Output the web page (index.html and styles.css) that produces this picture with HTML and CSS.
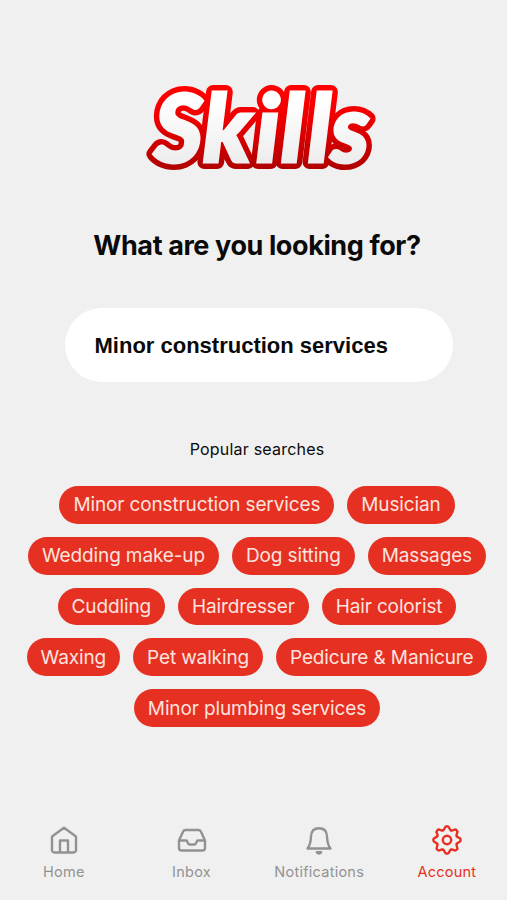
FILE: index.html
```html
<!DOCTYPE html>
<html lang="en">
<head>
    <meta charset="UTF-8">
    <meta name="viewport" content="width=device-width, initial-scale=1.0">
    <title>Skills</title>
    <link rel="stylesheet" href="styles.css">
</head>
<body>

<main class="container">
    <svg class="logo" viewBox="0 -30 250 155" role="img" aria-label="Skills">
        <defs>
            <linearGradient id="logoStroke" gradientUnits="userSpaceOnUse" x1="0" y1="10" x2="0" y2="94">
                <stop offset="0.1" stop-color="#ff0000"/>
                <stop offset="0.4" stop-color="#ee0000"/>
                <stop offset="1" stop-color="#b00000"/>
            </linearGradient>
            <linearGradient id="logoFill" gradientUnits="userSpaceOnUse" x1="0" y1="10" x2="0" y2="94">
                <stop offset="0.2" stop-color="#ffffff"/>
                <stop offset="1" stop-color="#ebebeb"/>
            </linearGradient>
        </defs>
        <text class="logo-outline" x="22 71 124 149 176 199" y="87">Skills</text>
        <text class="logo-text" x="22 71 124 149 176 199" y="87" aria-hidden="true">Skills</text>
    </svg>

    <h1>What are you looking for?</h1>

    <input class="search" type="text" value="Minor construction services" aria-label="Search">

    <h2>Popular searches</h2>

    <div class="tags">
        <div class="tag-row">
            <button class="tag">Minor construction services</button>
            <button class="tag">Musician</button>
        </div>
        <div class="tag-row">
            <button class="tag">Wedding make-up</button>
            <button class="tag">Dog sitting</button>
            <button class="tag">Massages</button>
        </div>
        <div class="tag-row">
            <button class="tag">Cuddling</button>
            <button class="tag">Hairdresser</button>
            <button class="tag">Hair colorist</button>
        </div>
        <div class="tag-row">
            <button class="tag">Waxing</button>
            <button class="tag">Pet walking</button>
            <button class="tag">Pedicure &amp; Manicure</button>
        </div>
        <div class="tag-row">
            <button class="tag">Minor plumbing services</button>
        </div>
    </div>
</main>

<nav class="tab-bar">
    <a class="tab">
        <svg class="icon" viewBox="0 0 32 32">
            <path d="M4 12.5 16 3.8l12 8.7V26a2.5 2.5 0 0 1-2.5 2.5h-19A2.5 2.5 0 0 1 4 26zM12 28V16.5h8V28"/>
        </svg>
        Home
    </a>
    <a class="tab">
        <svg class="icon" viewBox="0 0 32 32">
            <path d="M3 16.5 7 7.7A3 3 0 0 1 9.700 6h12.600A3 3 0 0 1 25 7.700l4 8.800V24a2.500 2.500 0 0 1-2.500 2.500h-21A2.500 2.500 0 0 1 3 24zh7.500c1 0 1 4 3 4h5c2 0 2-4 3-4H29"/>
        </svg>
        Inbox
    </a>
    <a class="tab">
        <svg class="icon" viewBox="0 0 32 32">
            <path d="M4.500 24.500C7.500 21 7.800 17 8 12.500 8.200 7 11 4.200 16 4.200s7.800 2.800 8 8.300c.2 4.500.5 8.500 3.500 12z"/>
            <path d="M13.800 28.300c1.200 1.600 3.200 1.600 4.400 0z"/>
        </svg>
        Notifications
    </a>
    <a class="tab active">
        <svg class="icon" viewBox="-16 -16 32 32">
            <defs>
                <path id="tooth" d="M-4-9.700C-1.500-10.700-3.200-13.700 0-13.700S1.500-10.700 4-9.700"/>
            </defs>
            <use href="#tooth"/>
            <use href="#tooth" transform="rotate(45)"/>
            <use href="#tooth" transform="rotate(90)"/>
            <use href="#tooth" transform="rotate(135)"/>
            <use href="#tooth" transform="rotate(180)"/>
            <use href="#tooth" transform="rotate(225)"/>
            <use href="#tooth" transform="rotate(270)"/>
            <use href="#tooth" transform="rotate(315)"/>
            <circle r="4.200"/>
        </svg>
        Account
    </a>
</nav>

</body>
</html>
```
FILE: styles.css
```css
* {
    box-sizing: border-box;
}

body {
    display: flex;
    flex-direction: column;
    height: 900px;
    margin: 0;
    overflow: hidden;
    background-color: #f0f0f0;
    color: #0a0a0a;
    font-family: Inter, 'Liberation Sans', sans-serif;
}

.container {
    flex: 1;
    display: flex;
    flex-direction: column;
    align-items: center;
    padding: 45px 0 0 7px;
}

.logo {
    width: 250px;
    height: 155px;
    margin-right: 1px;
    overflow: visible;
}

.logo text {
    font-family: Lato, sans-serif;
    font-size: 94px;
    font-weight: 900;
    font-style: italic;
}

.logo .logo-outline {
    fill: url(#logoStroke);
    stroke: url(#logoStroke);
    stroke-width: 14px;
    stroke-linejoin: round;
}

.logo .logo-text {
    fill: url(#logoFill);
    stroke: url(#logoFill);
    stroke-width: 3px;
}

h1 {
    margin: 26px 0 0;
    line-height: 40px;
    font-size: 27px;
    font-weight: 700;
    letter-spacing: -0.4px;
}

.search {
    width: 388px;
    height: 74px;
    margin: 42px 0 0 3px;
    padding: 2px 30px 0;
    border: none;
    border-radius: 37px;
    outline: none;
    background-color: white;
    color: #0a0a0a;
    font-family: 'Liberation Sans', Arial, sans-serif;
    font-size: 22px;
    font-weight: bold;
}

h2 {
    margin: 57px 0 0;
    line-height: 20px;
    font-size: 16px;
    font-weight: 400;
    letter-spacing: 0.2px;
}

.tags {
    display: flex;
    flex-direction: column;
    gap: 13px;
    margin-top: 27px;
}

.tag-row {
    display: flex;
    justify-content: center;
    gap: 13px;
}

.tag {
    height: 37.8px;
    padding: 0 14px;
    border: none;
    border-radius: 19px;
    background-color: #e53022;
    color: #fde3df;
    font-family: inherit;
    font-size: 19px;
    letter-spacing: -0.13px;
    white-space: nowrap;
}

.tab-bar {
    display: grid;
    grid-template-columns: repeat(4, 127.7px);
    height: 76px;
}

.tab {
    display: flex;
    flex-direction: column;
    align-items: center;
    color: #929292;
    font-size: 14.5px;
    line-height: 20px;
    letter-spacing: 0.25px;
}

.tab.active {
    color: #e53022;
}

.icon {
    width: 32px;
    height: 32px;
    margin-bottom: 6px;
    fill: none;
    stroke: currentColor;
    stroke-width: 2.4px;
    stroke-linecap: round;
    stroke-linejoin: round;
}
```
